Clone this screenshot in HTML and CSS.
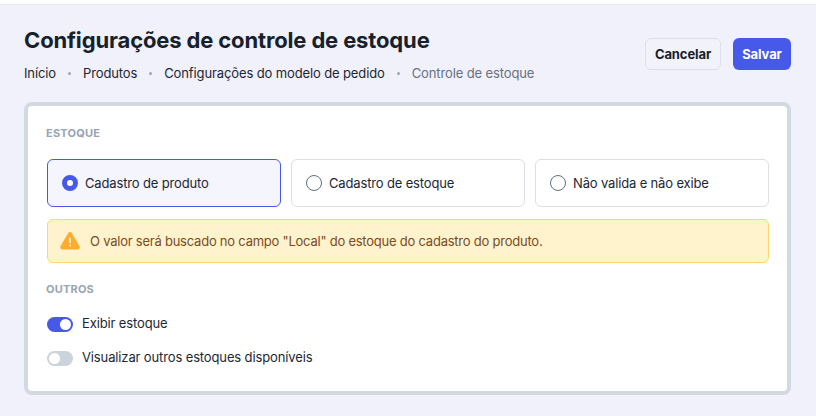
FILE: index.html
```html
<!DOCTYPE html>
<html lang="pt-BR">
<head>
<meta charset="utf-8">
<title>Configurações de controle de estoque</title>
<link rel="stylesheet" href="styles.css">
</head>
<body>
<div class="topbar"></div>
<main class="page">
  <header class="head">
    <div class="titles">
      <h1>Configurações de controle de estoque</h1>
      <nav class="crumbs">
        <a>Início</a><i></i><a>Produtos</a><i></i><a>Configurações do modelo de pedido</a><i></i><span>Controle de estoque</span>
      </nav>
    </div>
    <div class="actions">
      <button class="btn ghost">Cancelar</button>
      <button class="btn primary">Salvar</button>
    </div>
  </header>
  <section class="card">
    <h2 class="label first">ESTOQUE</h2>
    <div class="options">
      <div class="opt on"><span class="radio"></span>Cadastro de produto</div>
      <div class="opt"><span class="radio"></span>Cadastro de estoque</div>
      <div class="opt"><span class="radio"></span>Não valida e não exibe</div>
    </div>
    <div class="alert">
      <svg class="warn" viewBox="0 0 20 18" width="20" height="18"><path fill="#ffab2e" fill-rule="evenodd" d="M8.100 1.200a2.200 2.200 0 0 1 3.800 0l7.500 12.900c.9 1.500-.2 3.400-1.900 3.400H2.500c-1.700 0-2.800-1.900-1.900-3.400zM9.100 5.500v5.500h1.800V5.500zM9.100 12.500v1.900h1.800v-1.900z"/></svg>
      O valor será buscado no campo "Local" do estoque do cadastro do produto.
    </div>
    <h2 class="label second">OUTROS</h2>
    <div class="toggle-row"><span class="toggle on"></span>Exibir estoque</div>
    <div class="toggle-row"><span class="toggle"></span>Visualizar outros estoques disponíveis</div>
  </section>
</main>
</body>
</html>
```
FILE: styles.css
```css
* { box-sizing: border-box; }
html, body { margin: 0; height: 100%; }
body {
  background: #f1f1fb;
  font-family: Inter, "Liberation Sans", sans-serif;
  color: #1c2733;
  overflow: hidden;
}
.topbar { height: 5px; background: #fff; border-bottom: 1px solid #e6e8ef; }
.page { padding: 0 25px 0 24px; }
.head { display: flex; justify-content: space-between; align-items: flex-start; height: 97px; }
h1 { margin: 19px 0 0; font-size: 22px; letter-spacing: -0.14px; line-height: 32px; font-weight: 700; color: #17212b; }
.crumbs { display: flex; align-items: center; margin-top: 8px; font-size: 13px; letter-spacing: -0.12px; line-height: 18px; }
.crumbs i { width: 3px; height: 3px; border-radius: 50%; background: #9aa6b2; margin: 0 12px; }
.crumbs span { color: #66727f; }
.actions { display: flex; gap: 12px; margin-top: 33px; }
.btn { height: 32px; border-radius: 6px; font: 700 13px Inter, sans-serif; letter-spacing: -0.1px; padding: 0; }
.ghost { width: 76px; background: #f2f3fa; border: 1px solid #dcdfea; color: #17212b; }
.primary { width: 58px; background: #4759e8; border: 0; color: #fff; }
.card {
  height: 293px;
  background: #fff;
  border: 4px solid #d2d9df;
  border-radius: 8px;
  padding: 0 18px 0 19px;
}
.label { margin: 0 0 0 -1px; font-size: 11px; letter-spacing: 0.2px; line-height: 14px; font-weight: 700; color: #97a5b4; }
.first { padding-top: 20px; }
.options { display: grid; grid-template-columns: repeat(3, 1fr); gap: 10px; margin-top: 19px; }
.opt {
  height: 48px; display: flex; align-items: center; gap: 7px;
  padding-left: 14px; font-size: 13px; letter-spacing: -0.15px;
  border: 1px solid #dcdfe6; border-radius: 6px;
}
.opt.on { border-color: #4759e8; background: #f5f5fe; }
.radio { width: 16px; height: 16px; border-radius: 50%; border: 1.5px solid #5f6e7d; background: #fff; }
.on .radio { border: 5px solid #4759e8; }
.alert {
  height: 44px; margin-top: 12px; display: flex; align-items: center; gap: 10px;
  padding-left: 12px; font-size: 13px; letter-spacing: -0.23px; color: #7c4a1e;
  background: #fff3cd; border: 1px solid #ffd66e; border-radius: 6px;
}
.second { margin-top: 19px; }
.toggle-row { display: flex; align-items: flex-start; gap: 9px; font-size: 13px; letter-spacing: -0.13px; line-height: 16px; height: 16px; margin-top: 18px; }
.second + .toggle-row { margin-top: 19px; }
.toggle { width: 26px; height: 15px; margin-top: 2px; border-radius: 8px; background: #cdd3da; position: relative; }
.toggle::after {
  content: ""; position: absolute; top: 2px; left: 2px;
  width: 11px; height: 11px; border-radius: 50%; background: #fff;
}
.toggle.on { background: #4759e8; }
.toggle.on::after { left: 13px; }
```
